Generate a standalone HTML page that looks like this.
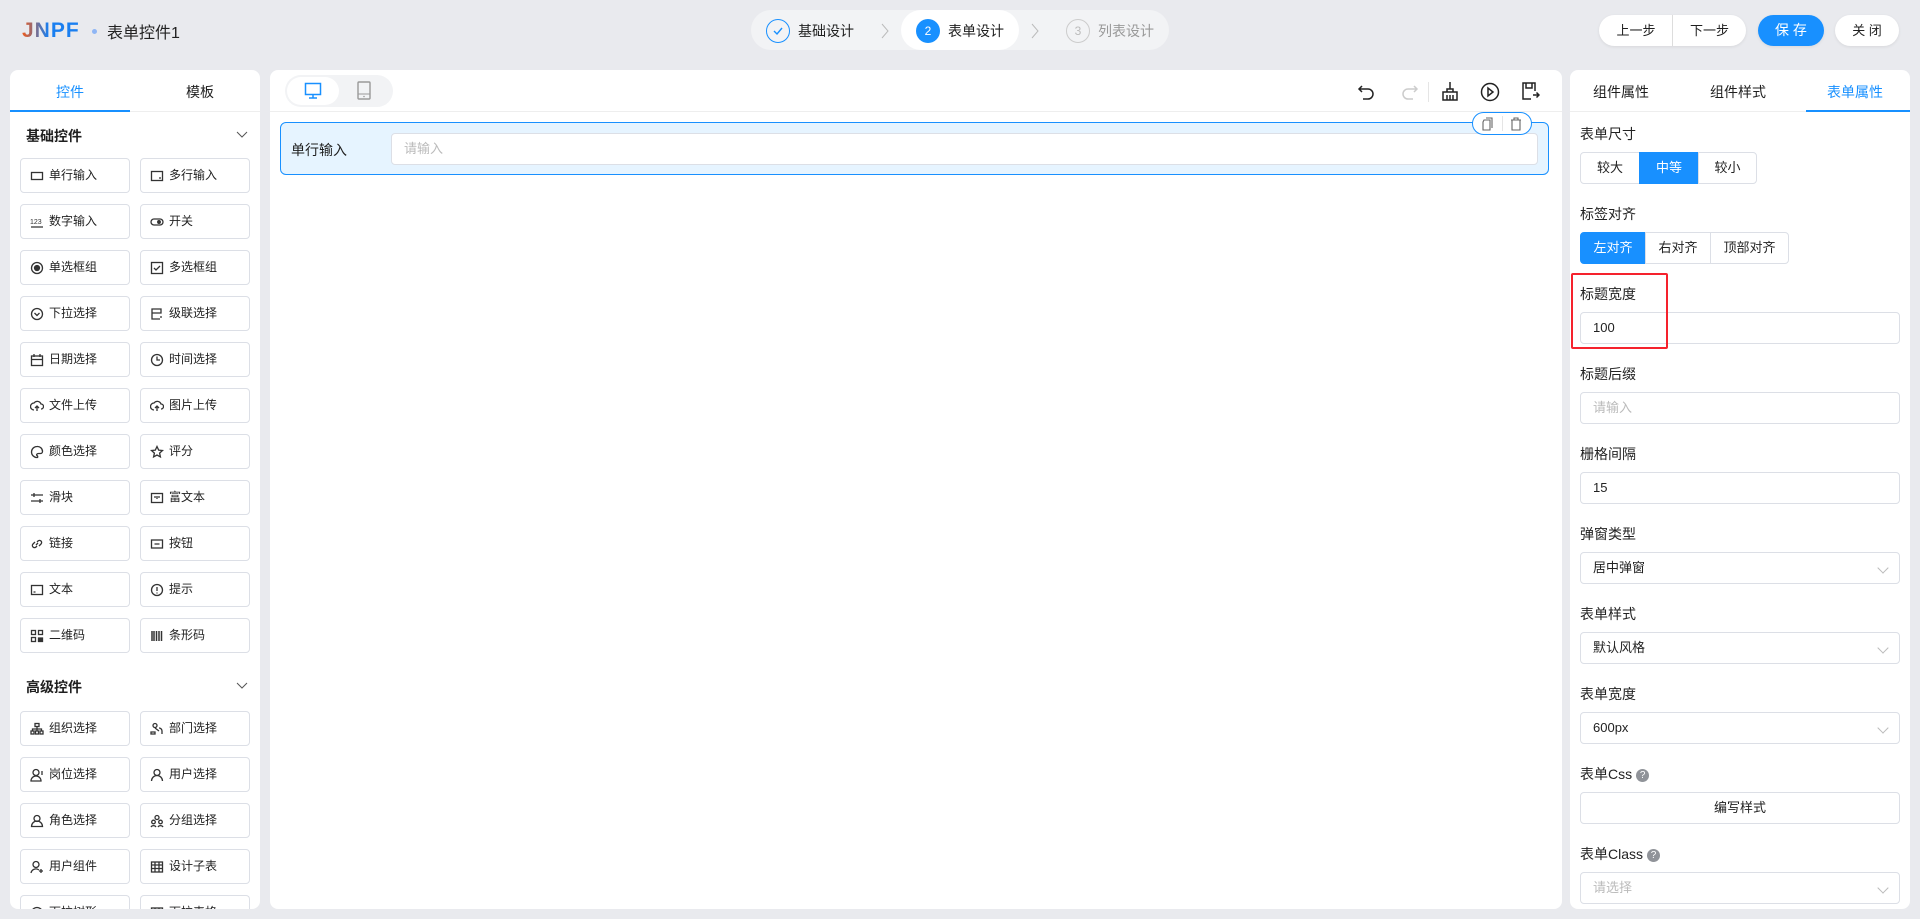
<!DOCTYPE html>
<html><head><meta charset="utf-8"><style>
*{box-sizing:border-box;margin:0;padding:0}
body{width:1920px;height:919px;background:#e9eaee;font-family:"Liberation Sans","Noto Sans CJK SC",sans-serif;color:#1f1f1f;position:relative;overflow:hidden}
.a{position:absolute}
.panel{position:absolute;background:#fff;border-radius:8px;overflow:hidden}
.it{position:absolute;width:110px;height:35px;border:1px solid #dcdfe6;border-radius:4px;font-size:12px;line-height:33px;padding-left:28px;color:#222}
.it svg{position:absolute;left:9px;top:10px;width:14px;height:14px;fill:none;stroke:#333;stroke-width:1.3}
.lbl{position:absolute;left:10px;font-size:14px;color:#222}
.inp{position:absolute;left:10px;width:320px;height:32px;border:1px solid #dcdfe6;border-radius:4px;font-size:13px;line-height:30px;padding-left:12px;color:#222}
.ph{color:#bbb}
.arr{position:absolute;right:12px;top:11px;width:8px;height:8px;border-right:1px solid #bbb;border-bottom:1px solid #bbb;transform:rotate(45deg)}
.seg{position:absolute;height:32px;border:1px solid #dcdfe6;font-size:13px;line-height:30px;text-align:center;color:#222}
.btn{position:absolute;top:15px;height:31px;border-radius:16px;font-size:13px;line-height:31px;text-align:center;background:#fff;box-shadow:0 1px 3px rgba(0,0,0,.08)}
.q{display:inline-block;width:13px;height:13px;border-radius:50%;background:#909399;color:#fff;font-size:10px;line-height:13px;text-align:center;vertical-align:1px;margin-left:4px}
.ti{position:absolute;top:82px;width:20px;height:20px;fill:none;stroke:#222;stroke-width:1.5}
</style></head><body>
<!-- header -->
<div class="a" style="left:22px;top:19px;font-size:21px;font-weight:bold;letter-spacing:1px;background:linear-gradient(90deg,#f05a1a,#1a7ff0 45%);-webkit-background-clip:text;color:transparent">JNPF</div>
<div class="a" style="left:92px;top:29px;width:5px;height:5px;border-radius:50%;background:#8fb6f5"></div>
<div class="a" style="left:107px;top:19px;font-size:16px;color:#222">表单控件1</div>
<div class="a" style="left:751px;top:10px;width:418px;height:40px;border-radius:20px;background:#f2f3f5"></div>
<div class="a" style="left:901px;top:10px;width:118px;height:40px;border-radius:20px;background:#fff"></div>
<div class="a" style="left:766px;top:19px;width:24px;height:24px;border-radius:50%;border:1px solid #1890ff"></div>
<svg class="a" style="left:771px;top:24px" width="14" height="14"><path d="M3 7l3 3 5-6" fill="none" stroke="#1890ff" stroke-width="1.4"/></svg>
<div class="a" style="left:798px;top:21px;font-size:14px">基础设计</div>
<svg class="a" style="left:880px;top:23px" width="10" height="16"><path d="M2 1l6 7-6 7" fill="none" stroke="#bbb"/></svg>
<div class="a" style="left:916px;top:19px;width:24px;height:24px;border-radius:50%;background:#1890ff;color:#fff;font-size:12px;text-align:center;line-height:24px">2</div>
<div class="a" style="left:948px;top:21px;font-size:14px">表单设计</div>
<svg class="a" style="left:1030px;top:23px" width="10" height="16"><path d="M2 1l6 7-6 7" fill="none" stroke="#bbb"/></svg>
<div class="a" style="left:1066px;top:19px;width:24px;height:24px;border-radius:50%;border:1px solid #ccc;color:#bbb;font-size:12px;text-align:center;line-height:22px">3</div>
<div class="a" style="left:1098px;top:21px;font-size:14px;color:#999">列表设计</div>
<div class="btn" style="left:1599px;width:147px"><span style="position:absolute;left:0;width:74px">上一步</span><span style="position:absolute;left:73px;top:0;height:31px;border-left:1px solid #ddd"></span><span style="position:absolute;left:74px;width:73px">下一步</span></div>
<div class="btn" style="left:1758px;width:66px;background:#1890ff;color:#fff;font-size:14px">保 存</div>
<div class="btn" style="left:1835px;width:64px">关 闭</div>

<!-- left panel -->
<div class="panel" style="left:10px;top:70px;width:250px;height:839px">
 <div class="a" style="left:0;top:41px;width:250px;border-top:1px solid #eee"></div>
 <div class="a" style="left:0;top:40px;width:120px;height:2px;background:#1890ff"></div>
 <div class="a" style="left:46px;top:12px;font-size:14px;color:#1890ff">控件</div>
 <div class="a" style="left:176px;top:12px;font-size:14px">模板</div>
 <div class="a" style="left:16px;top:56px;font-size:14px;font-weight:bold">基础控件</div>
 <svg class="a" style="left:226px;top:61px" width="12" height="8"><path d="M1 1l5 5 5-5" fill="none" stroke="#555"/></svg>
 <div class="a" style="left:16px;top:607px;font-size:14px;font-weight:bold">高级控件</div>
 <svg class="a" style="left:226px;top:612px" width="12" height="8"><path d="M1 1l5 5 5-5" fill="none" stroke="#555"/></svg>
</div>
<div id="items"></div>

<!-- center -->
<div class="panel" style="left:270px;top:70px;width:1292px;height:839px">
 <div class="a" style="left:0;top:41px;width:1292px;border-top:1px solid #eee"></div>
 <div class="a" style="left:15px;top:5px;width:108px;height:32px;border-radius:16px;background:#f2f3f5"></div>
 <div class="a" style="left:17px;top:7px;width:52px;height:28px;border-radius:14px;background:#fff"></div>
 <svg class="a" style="left:34px;top:12px" width="18" height="18"><rect x="1.5" y="1.5" width="15" height="11" fill="none" stroke="#1890ff" stroke-width="1.5"/><path d="M5 16h8M9 13v3" stroke="#1890ff" stroke-width="1.5"/></svg>
 <svg class="a" style="left:87px;top:11px" width="14" height="20"><rect x="1" y="1" width="12" height="17" rx="1" fill="none" stroke="#999" stroke-width="1.4"/><path d="M1 13h12" stroke="#999"/><circle cx="7" cy="15.5" r=".8" fill="#999"/></svg>
 <svg class="ti" style="left:1087px;top:12px" viewBox="0 0 20 20"><path d="M5 4L2 7l3 3M2 7h9a5 5 0 010 10H6"/></svg>
 <svg class="ti" style="left:1129px;top:12px;stroke:#ccc" viewBox="0 0 20 20"><path d="M15 4l3 3-3 3M18 7H9a5 5 0 000 10h5"/></svg>
 <div class="a" style="left:1158px;top:12px;height:20px;border-left:1px solid #e5e5e5"></div>
 <svg class="ti" style="left:1170px;top:11px" viewBox="0 0 20 20"><path d="M10 1v7M7 8h6v3H7zM3 11h14v8H3zM7 14v5M10 14v5M13 14v5"/></svg>
 <svg class="ti" style="left:1210px;top:12px" viewBox="0 0 20 20"><circle cx="10" cy="10" r="8.5"/><path d="M8 6v8l5-4z"/></svg>
 <svg class="ti" style="left:1250px;top:11px" viewBox="0 0 20 20"><path d="M15 10V2H3v16h8M6 2v5h6V2M13 14h6M16.5 11.5l2.5 2.5-2.5 2.5"/></svg>
 <div class="a" style="left:10px;top:52px;width:1269px;height:53px;border:1px solid #1890ff;border-radius:6px;background:#e6f4ff"></div>
 <div class="a" style="left:21px;top:70px;font-size:14px">单行输入</div>
 <div class="a" style="left:121px;top:63px;width:1147px;height:32px;border:1px solid #dcdfe6;border-radius:4px;background:#fff;font-size:13px;line-height:30px;padding-left:12px;color:#bbb">请输入</div>
 <div class="a" style="left:1202px;top:42px;width:60px;height:23px;border:1px solid #1890ff;border-radius:12px;background:#fff"></div>
 <div class="a" style="left:1232px;top:46px;height:15px;border-left:1px solid #e5e5e5"></div>
 <svg class="a" style="left:1210px;top:47px" width="14" height="14"><path d="M4 3h6v10H3V5zM6 1h6v10" fill="none" stroke="#666" stroke-width="1.1"/></svg>
 <svg class="a" style="left:1239px;top:47px" width="14" height="14"><path d="M2 3h10M5 3V1h4v2M3 3v10h8V3" fill="none" stroke="#666" stroke-width="1.1"/></svg>
</div>

<!-- right panel -->
<div class="panel" style="left:1570px;top:70px;width:340px;height:839px">
 <div class="a" style="left:0;top:41px;width:340px;border-top:1px solid #eee"></div>
 <div class="a" style="left:236px;top:40px;width:104px;height:2px;background:#1890ff"></div>
 <div class="a" style="left:23px;top:12px;font-size:14px">组件属性</div>
 <div class="a" style="left:140px;top:12px;font-size:14px">组件样式</div>
 <div class="a" style="left:257px;top:12px;font-size:14px;color:#1890ff">表单属性</div>
 <div class="lbl" style="top:54px">表单尺寸</div>
 <div class="seg" style="left:10px;top:82px;width:60px;border-radius:4px 0 0 4px">较大</div>
 <div class="seg" style="left:69px;top:82px;width:60px;background:#1890ff;border-color:#1890ff;color:#fff">中等</div>
 <div class="seg" style="left:128px;top:82px;width:59px;border-radius:0 4px 4px 0">较小</div>
 <div class="lbl" style="top:134px">标签对齐</div>
 <div class="seg" style="left:10px;top:162px;width:66px;border-radius:4px 0 0 4px;background:#1890ff;border-color:#1890ff;color:#fff">左对齐</div>
 <div class="seg" style="left:75px;top:162px;width:66px">右对齐</div>
 <div class="seg" style="left:140px;top:162px;width:79px;border-radius:0 4px 4px 0">顶部对齐</div>
 <div class="lbl" style="top:214px">标题宽度</div>
 <div class="inp" style="top:242px">100</div>
 <div class="a" style="left:1px;top:203px;width:97px;height:76px;border:2px solid #f5222d;border-radius:2px"></div>
 <div class="lbl" style="top:294px">标题后缀</div>
 <div class="inp ph" style="top:322px">请输入</div>
 <div class="lbl" style="top:374px">栅格间隔</div>
 <div class="inp" style="top:402px">15</div>
 <div class="lbl" style="top:454px">弹窗类型</div>
 <div class="inp" style="top:482px">居中弹窗<i class="arr"></i></div>
 <div class="lbl" style="top:534px">表单样式</div>
 <div class="inp" style="top:562px">默认风格<i class="arr"></i></div>
 <div class="lbl" style="top:614px">表单宽度</div>
 <div class="inp" style="top:642px">600px<i class="arr"></i></div>
 <div class="lbl" style="top:694px">表单Css<span class="q">?</span></div>
 <div class="inp" style="top:722px;text-align:center;padding:0">编写样式</div>
 <div class="lbl" style="top:774px">表单Class<span class="q">?</span></div>
 <div class="inp ph" style="top:802px">请选择<i class="arr"></i></div>
</div>

<script>
var ic={
r:'<rect x="1.5" y="3.5" width="11" height="7"/>',
m:'<rect x="1.5" y="2.5" width="11" height="9"/><path d="M9 9h2"/>',
n:'<path d="M1 12h12"/><text x="0" y="9" font-size="7" fill="#333" stroke="none">123</text>',
s:'<rect x="1" y="4" width="12" height="6" rx="3"/><circle cx="9" cy="7" r="1.3" fill="#333"/>',
ra:'<circle cx="7" cy="7" r="5.5"/><circle cx="7" cy="7" r="2.5" fill="#333"/>',
c:'<rect x="1.5" y="1.5" width="11" height="11"/><path d="M4 7l2 2 4-4"/>',
d:'<circle cx="7" cy="7" r="5.5"/><path d="M4.5 6l2.5 2.5L9.5 6"/>',
ca:'<path d="M2 2h9v4H2zM2 6v6h8M10 10h2"/>',
da:'<rect x="1.5" y="3" width="11" height="9.5"/><path d="M1.5 6.5h11M4 1v3M10 1v3"/>',
t:'<circle cx="7" cy="7" r="5.5"/><path d="M7 3.5V7h3"/>',
u:'<path d="M4 11a3.5 3.5 0 110-7 4 4 0 017 1 2.5 2.5 0 010 5M7 12V7M5 9l2-2 2 2"/>',
co:'<path d="M7 1.5a5.5 5.5 0 100 11c1 0 1-1.5 0-2s0-2 1.5-2h2a2 2 0 002-2A5 5 0 007 1.5z"/>',
st:'<path d="M7 1.5l1.7 3.6 3.8.4-2.9 2.6.8 3.8L7 10l-3.4 1.9.8-3.8L1.5 5.5l3.8-.4z"/>',
sl:'<path d="M1 4h12M1 10h12"/><path d="M4 2v4M10 8v4"/>',
ri:'<rect x="1.5" y="2.5" width="11" height="9"/><path d="M4 6h2M8 6h2M7 5v3"/>',
l:'<path d="M6 8l2-2M5 5L3 7a2 2 0 003 3l1-1M9 9l2-2a2 2 0 00-3-3L7 5"/>',
b:'<rect x="1.5" y="3" width="11" height="8"/><path d="M4.5 7h5"/>',
tx:'<rect x="1.5" y="2.5" width="11" height="9"/><path d="M3.5 9h2"/>',
ti:'<circle cx="7" cy="7" r="5.5"/><path d="M7 4v4M7 9.5v1"/>',
qr:'<rect x="1.5" y="1.5" width="4" height="4"/><rect x="8.5" y="1.5" width="4" height="4"/><rect x="1.5" y="8.5" width="4" height="4"/><path d="M8.5 9h4v3.5h-4z" fill="#333"/>',
bc:'<path d="M2 2v10M4 2v10M6.5 2v10M9 2v10M11.5 2v10" stroke-width="1.5"/>',
o:'<rect x="5" y="1.5" width="4" height="3"/><rect x="1" y="9" width="3" height="3"/><rect x="5.5" y="9" width="3" height="3"/><rect x="10" y="9" width="3" height="3"/><path d="M2.5 9V7h9v2M7 4.5V9"/>',
dp:'<circle cx="5" cy="3.5" r="2"/><path d="M1 12v-2h4v2zM9 6a3 3 0 013 3v3M5 6l4 3"/>',
p:'<circle cx="6" cy="4.5" r="3"/><path d="M1 13a5 5 0 0110 0zM12 3v4"/>',
us:'<circle cx="7" cy="4.5" r="3"/><path d="M1.5 13a5.5 5.5 0 0111 0"/>',
ro:'<circle cx="7" cy="4.5" r="3"/><path d="M1.5 12.5a5.5 5.5 0 0111 0z"/>',
g:'<circle cx="7" cy="3.5" r="2"/><circle cx="3.5" cy="8" r="1.8"/><circle cx="10.5" cy="8" r="1.8"/><path d="M1 13a3 3 0 015 0M8 13a3 3 0 015 0"/>',
uc:'<circle cx="6" cy="4.5" r="3"/><path d="M1 13a5 5 0 018-3M11 9v4M9 11h4"/>',
tb:'<rect x="1.5" y="2" width="11" height="10"/><path d="M1.5 5h11M1.5 8.5h11M5 2v10M9 2v10"/>'
};
var L=[['r','单行输入'],['m','多行输入'],['n','数字输入'],['s','开关'],['ra','单选框组'],['c','多选框组'],['d','下拉选择'],['ca','级联选择'],['da','日期选择'],['t','时间选择'],['u','文件上传'],['u','图片上传'],['co','颜色选择'],['st','评分'],['sl','滑块'],['ri','富文本'],['l','链接'],['b','按钮'],['tx','文本'],['ti','提示'],['qr','二维码'],['bc','条形码']];
var A=[['o','组织选择'],['dp','部门选择'],['p','岗位选择'],['us','用户选择'],['ro','角色选择'],['g','分组选择'],['uc','用户组件'],['tb','设计子表'],['d','下拉树形'],['tb','下拉表格']];
var h='';
function add(arr,y0){arr.forEach(function(e,i){var x=i%2?140:20,y=y0+Math.floor(i/2)*46;
 var hh=Math.min(35,909-y);if(hh<=0)return;
 h+='<div class="it" style="left:'+x+'px;top:'+y+'px;height:'+hh+'px;overflow:hidden;'+(hh<35?'border-bottom:none;border-radius:4px 4px 0 0':'')+'"><svg viewBox="0 0 14 14">'+ic[e[0]]+'</svg>'+e[1]+'</div>';});}
add(L,158);add(A,711);
document.getElementById('items').innerHTML=h;
</script>
</body></html>
